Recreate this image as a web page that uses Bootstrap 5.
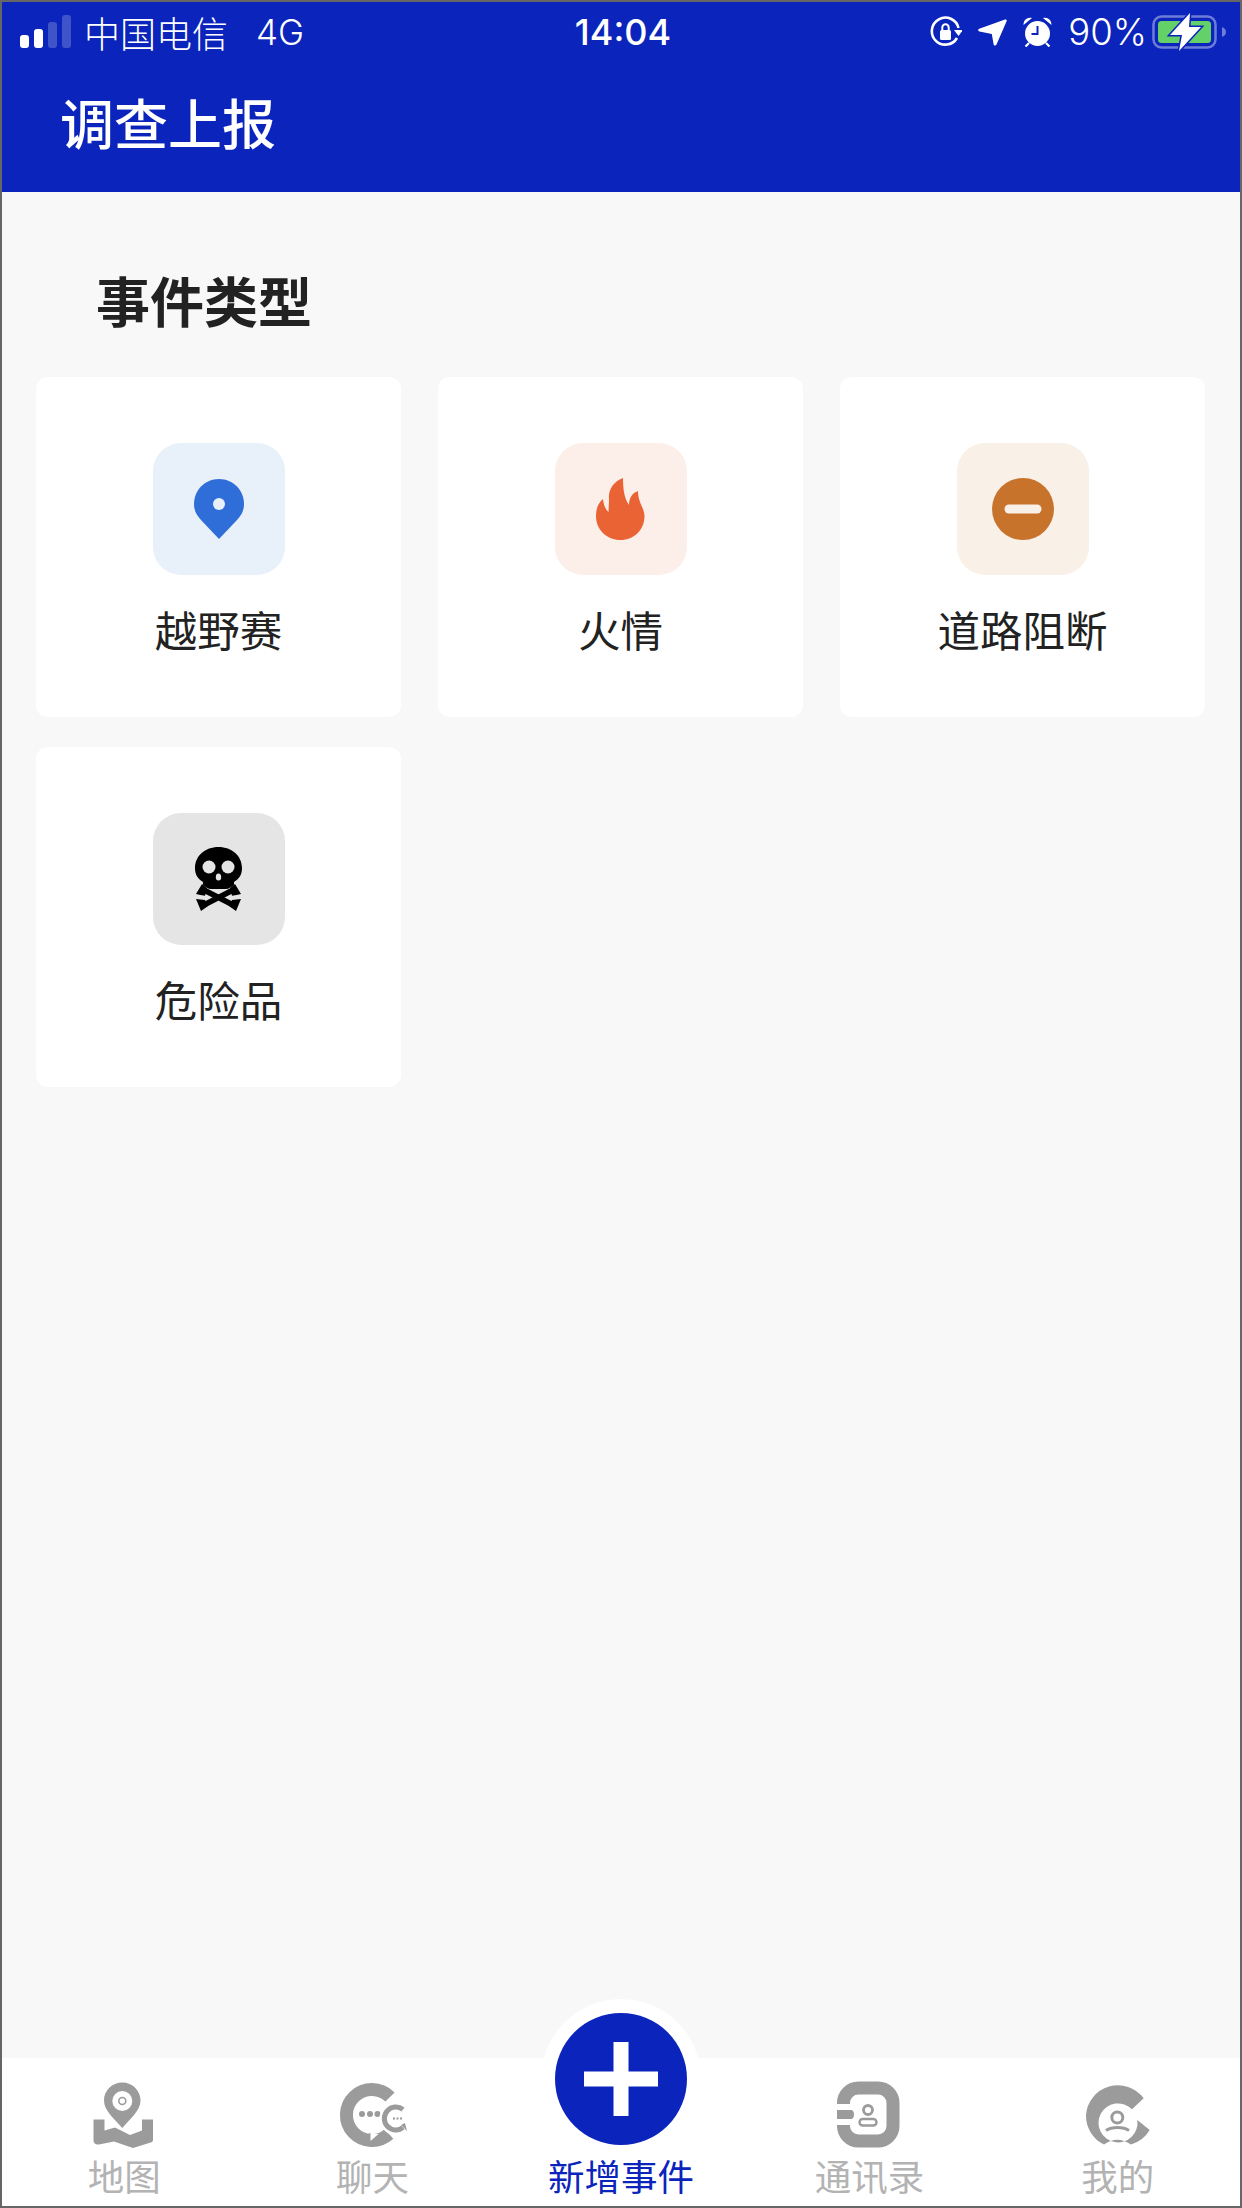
<!DOCTYPE html>
<html lang="zh-CN">

<head>
    <meta charset="UTF-8">
    <meta name="viewport" content="width=device-width, initial-scale=1.0">
    <title>调查上报</title>
    <link href="https://cdn.jsdelivr.net/npm/bootstrap@5.3.0/dist/css/bootstrap.min.css" rel="stylesheet">
    <style>
        html, body { height: 100%; }
        body {
            font-family: "Noto Sans CJK SC", sans-serif;
            background: #f8f8f8;
            color: #222;
            border: 2px solid #666;
            overflow: hidden;
        }
        svg { display: block; flex: none; }

        .app-head { background: #0b24bc; color: #fff; }
        .status-line { height: 60px; padding: 0 14px 0 18px; }
        .status-side { flex: 1 1 0; }
        .carrier { font-size: 36px; font-weight: 300; line-height: 1; margin-left: 12px; }
        .net-type { font-family: Inter, sans-serif; font-size: 35px; font-weight: 300; line-height: 1; margin-left: 28px; }
        .clock { font-family: Inter, sans-serif; font-size: 36px; font-weight: 500; line-height: 1; }
        .percent { font-family: Inter, sans-serif; font-size: 36.5px; font-weight: 300; line-height: 1; }
        .battery-gap { margin-left: 5px; }
        .page-title { height: 130px; padding: 0 0 10px 58px; font-size: 54px; font-weight: 500; line-height: 1; margin: 0; }

        .types-title { font-size: 54px; font-weight: 700; line-height: 62px; padding: 77px 0 0 94px; margin: 0 0 46px; color: #222; }
        .types-area { padding: 0 35px 0 34px; }
        .types-grid { --bs-gutter-x: 37px; --bs-gutter-y: 30px; }
        .type-card { height: 340px; border-radius: 12px; padding-top: 66px; }
        .type-box { width: 132px; height: 132px; border-radius: 28px; }
        .tone-blue { background: #e8f0fa; }
        .tone-red { background: #fcefe9; }
        .tone-brown { background: #f9f0e7; }
        .tone-grey { background: #e5e5e5; }
        .type-name { font-size: 42.5px; line-height: 60px; margin-top: 24px; color: #222; }

        .tab-strip { height: 148px; }
        .tab-cell { flex: 0 0 248.4px; padding-top: 17px; }
        .tab-name { font-size: 36.5px; line-height: 40px; margin-top: 1px; color: #b3b3b3; white-space: nowrap; }
        .tab-name-on { color: #0b24bc; }
        .tab-spacer { height: 80px; }
        .add-halo { width: 160px; height: 160px; top: -59px; left: 50%; transform: translateX(-50%); background: #fff; }
        .add-round { width: 132px; height: 132px; background: #0b24bc; }
    </style>
</head>

<body class="d-flex flex-column">
    <header class="app-head">
        <div class="status-line d-flex align-items-center">
            <div class="status-side d-flex align-items-center">
                <svg width="52" height="34" viewBox="0 0 52 34" fill="#fff">
                    <rect x="0" y="20" width="9" height="13" rx="3"/>
                    <rect x="14" y="14" width="9" height="19" rx="3"/>
                    <rect x="28" y="7" width="9" height="26" rx="3" opacity=".22"/>
                    <rect x="42" y="0" width="9" height="33" rx="3" opacity=".22"/>
                </svg>
                <span class="carrier">中国电信</span>
                <span class="net-type">4G</span>
            </div>
            <div class="clock">14:04</div>
            <div class="status-side d-flex align-items-center justify-content-end">
                <svg width="32" height="32" viewBox="0 0 32 32">
                    <path d="M27 22A13.500 13.500 0 1 1 28.500 12" fill="none" stroke="#fff" stroke-width="2.600"/>
                    <path d="M24 14h9l-4.500 6z" fill="#fff"/>
                    <rect x="10" y="14" width="11" height="10" rx="1.500" fill="#fff"/>
                    <path d="M12.300 14v-2.500a3.200 3.200 0 0 1 6.400 0V14" fill="none" stroke="#fff" stroke-width="2"/>
                </svg>
                <svg class="ms-3" width="29" height="27" viewBox="0 0 29 27" fill="#fff">
                    <path d="M27 0.500c1.300-.3 2 .5 1.600 1.700L18.500 25.500c-.6 1.400-2.600 1.200-2.900-.3L13.800 15 1.500 12.500C0 12.200-.3 10.300 1.200 9.700z"/>
                </svg>
                <svg class="ms-3" width="29" height="30" viewBox="0 0 29 30">
                    <circle cx="14.500" cy="16.500" r="12.500" fill="#fff"/>
                    <path d="M0.500 8C0.500 3 4 0 9 1zM28.500 8C28.500 3 25 0 20 1z" fill="#fff"/>
                    <path d="M6 26l-3.500 3.500M23 26l3.500 3.500" stroke="#fff" stroke-width="2.200"/>
                    <path d="M14.500 9v8H8.500" fill="none" stroke="#0b24bc" stroke-width="2"/>
                </svg>
                <span class="percent ms-3">90%</span>
                <svg class="battery-gap" width="74" height="38" viewBox="0 0 74 38">
                    <rect x="1.500" y="3.500" width="62" height="31" rx="8" fill="none" stroke="#6d7cd6" stroke-width="2.500"/>
                    <path d="M70 14c3 1 4 3 4 5s-1 4-4 5z" fill="#6d7cd6"/>
                    <rect x="6" y="8" width="53" height="22" rx="3.500" fill="#63d068"/>
                    <path d="M38 0L18 22H30L27 38L49 14H37z" fill="#fff" stroke="#0b24bc" stroke-width="3" paint-order="stroke"/>
                </svg>
            </div>
        </div>
        <h1 class="page-title d-flex align-items-center">调查上报</h1>
    </header>

    <main class="flex-grow-1">
        <h2 class="types-title">事件类型</h2>
        <div class="types-area">
            <div class="row row-cols-3 types-grid">
                <div class="col">
                    <div class="card border-0 type-card align-items-center">
                        <div class="type-box tone-blue d-flex align-items-center justify-content-center">
                            <svg width="50" height="60" viewBox="0 0 50 60">
                                <path d="M25 0C11 0 0 11 0 25c0 7 3 11.500 7 16l18 19 18-19c4-4.500 7-9 7-16C50 11 39 0 25 0z" fill="#2f6dd8"/>
                                <circle cx="25" cy="25" r="6" fill="#e8f0fa"/>
                            </svg>
                        </div>
                        <div class="type-name">越野赛</div>
                    </div>
                </div>
                <div class="col">
                    <div class="card border-0 type-card align-items-center">
                        <div class="type-box tone-red d-flex align-items-center justify-content-center">
                            <svg width="49" height="63" viewBox="0 0 49 63">
                                <path d="M27 0C17 4 12 12 13 22L12.500 34C9 31 7.500 26 7 21C2 25 0 31 0 38C0 52 11 62 24.500 62C38 62 48.500 52 48.500 38C48.500 30 42 25 42 13C36 15 33 20 33 27C28 20 27 10 27 0Z" fill="#e96335"/>
                            </svg>
                        </div>
                        <div class="type-name">火情</div>
                    </div>
                </div>
                <div class="col">
                    <div class="card border-0 type-card align-items-center">
                        <div class="type-box tone-brown d-flex align-items-center justify-content-center">
                            <svg width="62" height="62" viewBox="0 0 62 62">
                                <circle cx="31" cy="31" r="31" fill="#c8732c"/>
                                <rect x="12.500" y="26.500" width="37" height="9" rx="4.500" fill="#f9f0e7"/>
                            </svg>
                        </div>
                        <div class="type-name">道路阻断</div>
                    </div>
                </div>
                <div class="col">
                    <div class="card border-0 type-card align-items-center">
                        <div class="type-box tone-grey d-flex align-items-center justify-content-center">
                            <svg width="47" height="64" viewBox="0 0 47 64">
                                <path d="M23.500 0C10 0 0 9 0 21c0 7 3 11 8 14v3c3 2 5 4 8 4h15c3 0 5-2 8-4v-3c5-3 8-7 8-14C47 9 37 0 23.500 0z"/>
                                <circle cx="14" cy="20" r="6.500" fill="#e5e5e5"/>
                                <circle cx="33" cy="20" r="6.500" fill="#e5e5e5"/>
                                <ellipse cx="23.500" cy="30" rx="2.700" ry="3.500" fill="#e5e5e5"/>
                                <path d="M7 42L40 59M40 42L7 59" stroke="#000" stroke-width="5.500" fill="none"/>
                                <path d="M7 37l-6 10 9 2 2-8zM40 37l6 10-9 2-2-8zM6 64L1 52l9 1 3 6zM41 64l5-12-9 1-3 6z"/>
                                <path d="M1 49.500h12M34 49.500h12" stroke="#e5e5e5" stroke-width="1.600"/>
                            </svg>
                        </div>
                        <div class="type-name">危险品</div>
                    </div>
                </div>
            </div>
        </div>
    </main>

    <nav class="tab-strip bg-white d-flex justify-content-center position-relative">
        <div class="tab-cell d-flex flex-column align-items-center">
            <svg width="80" height="80" viewBox="0 0 80 80">
                <path fill-rule="evenodd" d="M38.300 7.500C28 7.500 20 15.500 20 25.500c0 10 10 18 18.300 27.500C46.500 43.500 56.500 35.500 56.500 25.500 56.500 15.500 48.500 7.500 38.300 7.500zM38.300 16a10 10 0 1 1 0 20 10 10 0 0 1 0-20z" fill="#9b9b9b"/>
                <circle cx="38.300" cy="26" r="3.500" fill="none" stroke="#9b9b9b" stroke-width="1.600"/>
                <path d="M9.500 44.500H20.500V55.500L31 52.500 46 60 58 55.500V44.500H69V65c0 1-.5 1.800-1.500 2.300L49 73 30 66.500 15 69.500c-3 .5-5.500-1-5.500-4z" fill="#9b9b9b"/>
            </svg>
            <div class="tab-name">地图</div>
        </div>
        <div class="tab-cell d-flex flex-column align-items-center">
            <svg width="80" height="80" viewBox="0 0 80 80">
                <path d="M57 22A25.500 25.500 0 1 0 56 59" fill="none" stroke="#9b9b9b" stroke-width="13"/>
                <path d="M36 58v12l16-8z" fill="#9b9b9b"/>
                <path d="M37.500 58v8l8-7z" fill="#fff"/>
                <circle cx="29" cy="39" r="3" fill="#9b9b9b"/>
                <circle cx="37" cy="39" r="3" fill="#9b9b9b"/>
                <circle cx="44.500" cy="39" r="3" fill="#9b9b9b"/>
                <circle cx="63.500" cy="43.500" r="17" fill="#fff"/>
                <path d="M70 34.500A11.500 11.500 0 1 0 70 52.500" fill="none" stroke="#9b9b9b" stroke-width="5"/>
                <path d="M68 50l6 6-2-8z" fill="#9b9b9b"/>
                <path d="M60 43.500h2M63.500 43.500h2M67 43.500h2" stroke="#9b9b9b" stroke-width="2.200"/>
            </svg>
            <div class="tab-name">聊天</div>
        </div>
        <div class="tab-cell d-flex flex-column align-items-center">
            <div class="tab-spacer"></div>
            <div class="tab-name tab-name-on">新增事件</div>
        </div>
        <div class="tab-cell d-flex flex-column align-items-center">
            <svg width="80" height="80" viewBox="0 0 80 80">
                <rect x="14.500" y="13" width="49.500" height="53" rx="15" fill="none" stroke="#9b9b9b" stroke-width="13"/>
                <rect x="7" y="29" width="18" height="21" fill="#fff"/>
                <path d="M8 35H22c2 0 3 2 3 4.500S24 44 22 44H8z" fill="#9b9b9b"/>
                <circle cx="39" cy="35" r="4.500" fill="none" stroke="#9b9b9b" stroke-width="2.800"/>
                <rect x="30.500" y="44" width="17" height="6.500" rx="3.200" fill="none" stroke="#9b9b9b" stroke-width="2.400"/>
            </svg>
            <div class="tab-name">通讯录</div>
        </div>
        <div class="tab-cell d-flex flex-column align-items-center">
            <svg width="80" height="80" viewBox="0 0 80 80">
                <path d="M65.700 23.300A32 32 0 0 0 8 40A32 32 0 0 0 26 69.500Q39 60 53 69.500A32 32 0 0 0 71.700 55L59.300 45A19.500 19.500 0 1 1 54 34.300z" fill="#9b9b9b"/>
                <path d="M29 55H50L50.500 62Q39.500 58 28.500 62z" fill="#fff"/>
                <circle cx="39.300" cy="42.500" r="5.500" fill="none" stroke="#9b9b9b" stroke-width="3"/>
                <path d="M28 55.500C34 51.500 45 51.500 51 55.500" fill="none" stroke="#9b9b9b" stroke-width="3"/>
            </svg>
            <div class="tab-name">我的</div>
        </div>
        <div class="add-halo position-absolute rounded-circle d-flex align-items-center justify-content-center">
            <div class="add-round rounded-circle d-flex align-items-center justify-content-center">
                <svg width="74" height="74" viewBox="0 0 74 74" fill="#fff">
                    <rect x="29.500" y="0" width="15" height="74"/>
                    <rect x="0" y="29.500" width="74" height="15"/>
                </svg>
            </div>
        </div>
    </nav>
</body>

</html>
